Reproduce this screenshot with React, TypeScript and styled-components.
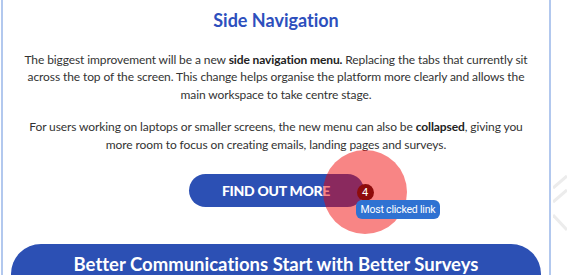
import styled, { createGlobalStyle } from 'styled-components';

const GlobalStyle = createGlobalStyle`
  html, body {
    margin: 0;
    padding: 0;
    background: #ffffff;
    overflow: hidden;
  }
  body {
    font-family: Lato, "Open Sans", sans-serif;
    font-variant-ligatures: none;
  }
`;

const Page = styled.div`
  position: relative;
  width: 567px;
  height: 275px;
  overflow: hidden;
`;

const Card = styled.section`
  margin-left: 1px;
  width: 546px;
  height: 275px;
  border-left: 2px solid #b2c8ee;
  border-right: 2px solid #b2c8ee;
  background: #ffffff;
  display: flex;
  flex-direction: column;
  align-items: center;
  padding-top: 9px;
  box-sizing: content-box;
`;

const Title = styled.h2`
  margin: 0;
  font-family: Lato, sans-serif;
  font-weight: 700;
  font-size: 18px;
  line-height: 22px;
  color: #2d4fbd;
`;

const Text = styled.p<{ $gap: number }>`
  margin: ${({ $gap }) => $gap}px 0 0;
  font-family: Lato, sans-serif;
  font-size: 12px;
  line-height: 17.5px;
  color: #333333;
  text-align: center;
  letter-spacing: -0.1px;

  strong {
    font-weight: 700;
    color: #222222;
  }
`;

const ButtonWrap = styled.div`
  position: relative;
  margin-top: 21px;
`;

const Button = styled.a`
  display: flex;
  align-items: center;
  justify-content: center;
  width: 175px;
  height: 33px;
  border-radius: 17px;
  background: #2c50b4;
  color: #ffffff;
  font-family: Lato, sans-serif;
  font-weight: 900;
  font-size: 14px;
  letter-spacing: -0.3px;
  text-decoration: none;
`;

const Heat = styled.div`
  position: absolute;
  left: 134px;
  top: -24px;
  width: 84px;
  height: 84px;
  border-radius: 50%;
  background: rgba(240, 0, 0, 0.48);
  pointer-events: none;
`;

const Badge = styled.span`
  position: absolute;
  left: 168px;
  top: 10px;
  width: 17px;
  height: 17px;
  border-radius: 50%;
  background: #8e0c0c;
  color: #ffffff;
  font-family: Roboto, sans-serif;
  font-size: 11px;
  line-height: 17px;
  text-align: center;
`;

const Tooltip = styled.span`
  position: absolute;
  left: 167px;
  top: 26px;
  height: 19px;
  padding: 0 5px;
  border-radius: 6px;
  background: #2f72d2;
  color: #ffffff;
  font-family: Roboto, sans-serif;
  font-size: 10.5px;
  line-height: 19px;
  white-space: nowrap;
  letter-spacing: -0.2px;
`;

const Banner = styled.div`
  margin-top: 37px;
  align-self: stretch;
  margin-left: 8px;
  margin-right: 8px;
  height: 60px;
  border-radius: 30px 30px 0 0;
  background: #2c50b4;
  color: #ffffff;
  font-family: Lato, sans-serif;
  font-weight: 700;
  font-size: 18.5px;
  text-align: center;
  padding-top: 9px;
  box-sizing: border-box;
`;

const Decor = styled.svg`
  position: absolute;
  left: 553px;
  top: 160px;
`;

export default function App() {
  return (
    <Page>
      <GlobalStyle />
      <Card>
        <Title>Side Navigation</Title>
        <Text $gap={19.5}>
          The biggest improvement will be a new <strong>side navigation menu.</strong> Replacing the tabs that currently sit
          <br />
          across the top of the screen. This change helps organise the platform more clearly and allows the
          <br />
          main workspace to take centre stage.
        </Text>
        <Text $gap={15}>
          For users working on laptops or smaller screens, the new menu can also be <strong>collapsed</strong>, giving you
          <br />
          more room to focus on creating emails, landing pages and surveys.
        </Text>
        <ButtonWrap>
          <Button href="#">FIND OUT MORE</Button>
          <Heat />
          <Badge>4</Badge>
          <Tooltip>Most clicked link</Tooltip>
        </ButtonWrap>
        <Banner>Better Communications Start with Better Surveys</Banner>
      </Card>
      <Decor width="14" height="90" viewBox="0 0 14 90">
        <g stroke="#ececec" strokeWidth="3" fill="none">
          <line x1="0" y1="28" x2="14" y2="16" />
          <line x1="0" y1="42" x2="14" y2="30" />
          <line x1="0" y1="55" x2="14" y2="70" />
        </g>
      </Decor>
    </Page>
  );
}
